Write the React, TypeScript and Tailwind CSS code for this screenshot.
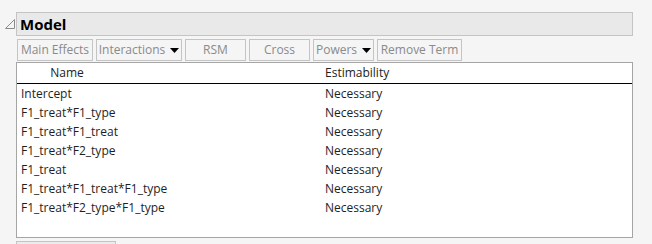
import React from "react";

const buttons: { label: string; w: string; menu?: boolean }[] = [
  { label: "Main Effects", w: "w-[76px]" },
  { label: "Interactions", w: "w-[86px]", menu: true },
  { label: "RSM", w: "w-[61px]" },
  { label: "Cross", w: "w-[61px]" },
  { label: "Powers", w: "w-[61px]", menu: true },
  { label: "Remove Term", w: "w-[85px]" },
];

const terms = [
  "Intercept",
  "F1_treat*F1_type",
  "F1_treat*F1_treat",
  "F1_treat*F2_type",
  "F1_treat",
  "F1_treat*F1_treat*F1_type",
  "F1_treat*F2_type*F1_type",
];

function Caret() {
  return (
    <svg width="9" height="5" viewBox="0 0 9 5" className="ml-[5px]">
      <path d="M0 0 H9 L4.5 5 Z" fill="#000" />
    </svg>
  );
}

export default function App() {
  return (
    <div
      className="w-[652px] h-[244px] overflow-hidden bg-[#f5f5f5] pt-[12px] text-[12px]"
      style={{ fontFamily: '"Open Sans", "Noto Sans", sans-serif' }}
    >
      {/* Outline header */}
      <div className="flex items-center">
        <svg width="16" height="24" viewBox="0 0 16 24" className="shrink-0">
          <path d="M5.5 16.5 L14.5 7.5 V16.5 Z" fill="none" stroke="#8c8c8c" strokeWidth="1" />
        </svg>
        <div className="w-[617px] h-[24px] bg-[#e9e9e9] border border-[#c4c4c4] flex items-center pl-[3px]">
          <span className="text-[15px] font-bold text-black leading-none">Model</span>
        </div>
      </div>

      {/* Button bar */}
      <div className="ml-[17px] mt-[3px] flex gap-[3px]">
        {buttons.map((b) => (
          <div
            key={b.label}
            className={`${b.w} h-[22px] border border-[#c4c4c4] flex items-center justify-center text-[#8a8a8a] leading-none`}
          >
            <span>{b.label}</span>
            {b.menu && <Caret />}
          </div>
        ))}
      </div>

      {/* Term table */}
      <div className="ml-[16px] mt-[1px] w-[617px] h-[176px] bg-white border border-[#a5a5a5]">
        <div className="h-[21px] flex items-center border-b border-black text-[#222]">
          <div className="w-[100px] text-center">Name</div>
          <div className="ml-[208px]">Estimability</div>
        </div>
        {terms.map((t) => (
          <div key={t} className="h-[19px] flex items-center text-[#1e1e1e]">
            <div className="w-[308px] pl-[4px]">{t}</div>
            <div>Necessary</div>
          </div>
        ))}
      </div>

      <div className="ml-[16px] mt-[3px] w-[100px] h-[10px] bg-[#ececec] border border-[#c4c4c4]" />
    </div>
  );
}
